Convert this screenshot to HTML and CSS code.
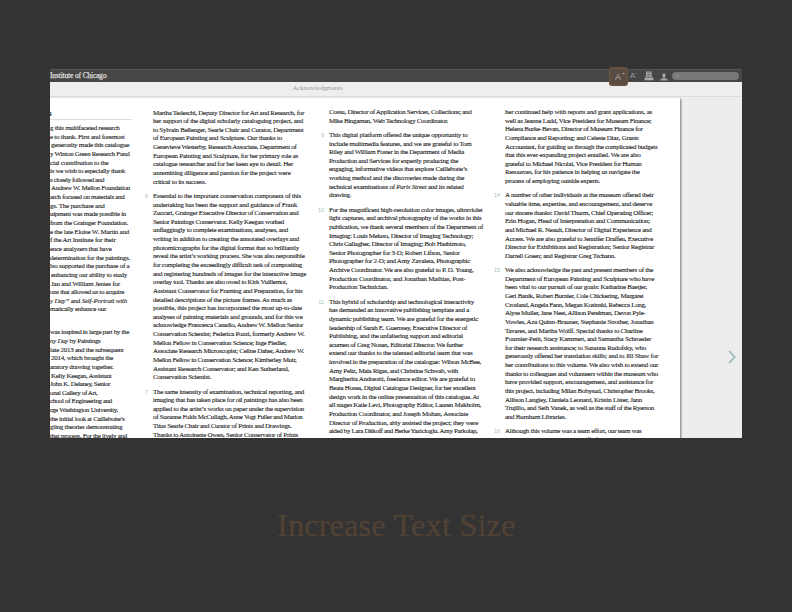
FILE: index.html
```html
<!DOCTYPE html>
<html lang="en">
<head>
<meta charset="utf-8">
<title>Acknowledgments</title>
<link rel="stylesheet" href="styles.css">
</head>
<body>
<main class="viewer">
  <header class="bar">
    <span class="brand" data-w="56.5">Institute of Chicago</span>
    <div class="tools">
      <span class="tool active">A<sup>+</sup></span>
      <span class="tool minus">A<sup>−</sup></span>
      <svg class="print" viewBox="0 0 10 10"><path d="M2.700 4.500V1h4.200v3.500M2.900 2.700h3.600" fill="none" stroke="#a9a9a9" stroke-width="1.200"/><path d="M1.700 4.200h6.400v1.600H1.700zM.6 6.500h8.800v2.700H.6z" fill="#a9a9a9"/></svg>
      <svg class="user" viewBox="0 0 8 8"><path d="M4 .5c2.300 0 2 2.700.8 3.700v1.100l2.900.6v1.600H.3V5.900l2.900-.6V4.200C2 3.200 1.700.5 4 .5z" fill="#a4a4a4"/></svg>
      <div class="search"><svg viewBox="0 0 6 6"><circle cx="3.500" cy="2.300" r="1.600"/><path d="M2.300 3.500L.7 5.300"/></svg></div>
    </div>
  </header>
  <div class="crumb"><span data-w="50">Acknowledgments</span></div>
  <div class="stage">
    <article class="page">
      <section class="col first"><h2>s</h2></section>
      <section class="col second"></section>
      <section class="col third"></section>
      <section class="col fourth"></section>
    </article>
    <svg class="next" viewBox="0 0 8 14"><path d="M1 1l5.700 6L1 13" fill="none" stroke="#a9bfc7" stroke-width="1.900"/></svg>
  </div>
</main>
<p class="caption"><span data-w="238.500">Increase Text Size</span></p>
<script src="script.js"></script>
</body>
</html>
```
FILE: script.js
```js
// Each paragraph: [number, [line width, line text], ...]
const columns = {
  first: [
    ['', [69.5, 'g this multifaceted research'], [74.5, 'e to thank. First and foremost'], [78, '&generosity made this catalogue'],
      [79.5, 'y Winton Green Research Fund'], [58.5, 'cial contribution to the'], [75, 'is we wish to especially thank'],
      [54, 's closely followed and'], [79, '&Andrew W. Mellon Foundation'], [74.5, 'arch focused on materials and'],
      [54.5, 'gs. The purchase and'], [76, 'uipment was made possible in'], [78, 'from the Grainger Foundation.'],
      [79, 'e the late Eloise W. Martin and'], [65.5, 'f the Art Institute for their'], [61.5, 'ence analyzers that have'],
      [80, 'determination for the paintings.'], [79.5, 'lso supported the purchase of a'], [76, '&enhancing our ability to study'],
      [69, '&Jan and William Jentes for'], [74, 'ons that allowed us to acquire'],
      [77, '<em>y Day”</em> and <em>Self-Portrait with</em>'], [56, 'matically enhance our'], [0, '&nbsp;']],
    ['', [79, 'was inspired in large part by the'], [50.5, '<em>ny Day</em> by Paintings'], [73.5, 'late 2013 and the subsequent'],
      [62, '&2014, which brought the'], [63.5, 'aratory drawing together.'], [60.5, '&Kelly Keegan, Assistant'],
      [60, 'John K. Delaney, Senior'], [47.5, 'onal Gallery of Art,'], [62, 'chool of Engineering and'],
      [68, 'rge Washington University,'], [74.5, 'the initial look at Caillebotte’s'],
      [72.5, 'gling theories demonstrating'], [77, 'that process. For the lively and']]
  ],
  second: [
    ['', [151, 'Martha Tedeschi, Deputy Director for Art and Research, for'], [150, 'her support of the digital scholarly cataloguing project, and'],
      [150.5, 'to Sylvain Bellenger, Searle Chair and Curator, Department'], [129, 'of European Painting and Sculpture. Our thanks to'],
      [143.5, 'Genevieve Westerby, Research Associate, Department of'], [145, 'European Painting and Sculpture, for her primary role as'],
      [140, 'catalogue researcher and for her keen eye to detail. Her'], [137.5, 'unremitting diligence and passion for the project were'],
      [53, 'critical to its success.']],
    ['6', [148, 'Essential to the important conservation component of this'], [144, 'undertaking has been the support and guidance of Frank'],
      [145.5, 'Zuccari, Grainger Executive Director of Conservation and'], [131, 'Senior Paintings Conservator. Kelly Keegan worked'],
      [135, 'unflaggingly to complete examinations, analyses, and'], [146, 'writing in addition to creating the annotated overlays and'],
      [146, 'photomicrographs for the digital format that so brilliantly'], [151.5, 'reveal the artist’s working process. She was also responsible'],
      [149, 'for completing the exceedingly difficult task of compositing'], [153, 'and registering hundreds of images for the interactive image'],
      [134, 'overlay tool. Thanks are also owed to Kirk Vuillemot,'], [149.5, 'Assistant Conservator for Framing and Preparation, for his'],
      [139, 'detailed descriptions of the picture frames. As much as'], [149, 'possible, this project has incorporated the most up-to-date'],
      [149.5, 'analyses of painting materials and grounds, and for this we'], [150, 'acknowledge Francesca Casadio, Andrew W. Mellon Senior'],
      [151.5, 'Conservation Scientist; Federica Pozzi, formerly Andrew W.'], [133.5, 'Mellon Fellow in Conservation Science; Inge Fiedler,'],
      [151, 'Associate Research Microscopist; Celine Daher, Andrew W.'], [143.5, 'Mellon Fellow in Conservation Science; Kimberley Muir,'],
      [136, 'Assistant Research Conservator; and Ken Sutherland,'], [58, 'Conservation Scientist.']],
    ['7', [151, 'The same intensity of examination, technical reporting, and'], [149.5, 'imaging that has taken place for oil paintings has also been'],
      [151, 'applied to the artist’s works on paper under the supervision'], [149.5, 'of Suzanne Folds McCullagh, Anne Vogt Fuller and Marion'],
      [138.5, 'Titus Searle Chair and Curator of Prints and Drawings.'], [145, 'Thanks to Antoinette Owen, Senior Conservator of Prints']]
  ],
  third: [
    ['', [142.5, 'Cossu, Director of Application Services, Collections; and'], [119, 'Mike Bingaman, Web Technology Coordinator.']],
    ['9', [138.5, 'This digital platform offered the unique opportunity to'], [142.5, 'include multimedia features, and we are grateful to Tom'],
      [135, 'Riley and William Foster in the Department of Media'], [129, 'Production and Services for expertly producing the'],
      [138, 'engaging, informative videos that explore Caillebotte’s'], [135, 'working method and the discoveries made during the'],
      [134.5, 'technical examinations of <em>Paris Street</em> and its related'], [22, 'drawing.']],
    ['10', [153.5, 'For the magnificent high-resolution color images, ultraviolet'], [152.5, 'light captures, and archival photography of the works in this'],
      [154, 'publication, we thank several members of the Department of'], [144, 'Imaging: Louis Meluso, Director of Imaging Technology;'],
      [137, 'Chris Gallagher, Director of Imaging; Bob Hashimoto,'], [130.5, 'Senior Photographer for 3-D; Robert Lifson, Senior'],
      [141, 'Photographer for 2-D; and Amy Zavaleta, Photographic'], [144.5, 'Archive Coordinator. We are also grateful to P. D. Young,'],
      [136.5, 'Production Coordinator, and Jonathan Mathias, Post-'], [59, 'Production Technician.']],
    ['11', [145, 'This hybrid of scholarship and technological interactivity'], [140, 'has demanded an innovative publishing template and a'],
      [149, 'dynamic publishing team. We are grateful for the energetic'], [138, 'leadership of Sarah E. Guernsey, Executive Director of'],
      [134, 'Publishing, and the unfaltering support and editorial'], [134, 'acumen of Greg Nosan, Editorial Director. We further'],
      [143.5, 'extend our thanks to the talented editorial team that was'], [152, 'involved in the preparation of the catalogue: Wilson McBee,'],
      [129, 'Amy Peltz, Maia Rigas, and Christine Schwab, with'], [146, 'Margherita Andreotti, freelance editor. We are grateful to'],
      [146.5, 'Beata Hosea, Digital Catalogue Designer, for her excellent'], [150, 'design work in the online presentation of this catalogue. At'],
      [152, 'all stages Katie Levi, Photography Editor, Lauren Makholm,'], [139, 'Production Coordinator, and Joseph Mohan, Associate'],
      [149, 'Director of Production, ably assisted the project; they were'], [148.5, 'aided by Lara Ditkoff and Berke Yazicioglu. Amy Parkolap,'],
      [128, 'Production Coordinator, and museum with the book']]
  ],
  fourth: [
    ['', [147, 'her continued help with reports and grant applications, as'], [146.5, 'well as Jeanne Ladd, Vice President for Museum Finance;'],
      [137.5, 'Helena Burke-Bevan, Director of Museum Finance for'], [133.5, 'Compliance and Reporting; and Celeste Diaz, Grants'],
      [152.5, 'Accountant, for guiding us through the complicated budgets'], [135.5, 'that this ever-expanding project entailed. We are also'],
      [136.5, 'grateful to Michael Nicolai, Vice President for Human'], [134.5, 'Resources, for his patience in helping us navigate the'],
      [95, 'process of employing outside experts.']],
    ['14', [148.5, 'A number of other individuals at the museum offered their'], [147, 'valuable time, expertise, and encouragement, and deserve'],
      [148, 'our sincere thanks: David Thurm, Chief Operating Officer;'], [145, 'Erin Hogan, Head of Interpretation and Communication;'],
      [146.5, 'and Michael R. Neault, Director of Digital Experience and'], [148, 'Access. We are also grateful to Jennifer Draffen, Executive'],
      [149, 'Director for Exhibitions and Registration; Senior Registrar'], [110.5, 'Darrell Green; and Registrar Greg Tschann.']],
    ['15', [148, 'We also acknowledge the past and present members of the'], [149, 'Department of European Painting and Sculpture who have'],
      [142, 'been vital to our pursuit of our goals: Katharine Baetjer,'], [138.5, 'Geri Banik, Robert Burnier, Cole Chickering, Margaret'],
      [141, 'Crosland, Angela Fann, Megan Kosinski, Rebecca Long,'], [140.5, 'Alyse Muller, Jane Neet, Allison Perelman, Devon Pyle-'],
      [148.5, 'Vowles, Aza Quinn-Brauner, Stephanie Strother, Jonathan'], [137.5, 'Tavares, and Martha Wolff. Special thanks to Charline'],
      [146, 'Fournier-Petit, Stacy Kammert, and Samantha Schroeder'], [141, 'for their research assistance; to Susanna Rudofsky, who'],
      [153, 'generously offered her translation skills; and to Jill Shaw for'], [153, 'her contributions to this volume. We also wish to extend our'],
      [153, 'thanks to colleagues and volunteers within the museum who'], [148, 'have provided support, encouragement, and assistance for'],
      [149.5, 'this project, including Milan Bobysud, Christopher Brooks,'], [137, 'Allison Langley, Daniela Leonard, Kristin Lister, Jann'],
      [149, 'Trujillo, and Seth Vanek, as well as the staff of the Ryerson'], [61, 'and Burnham Libraries.']],
    ['16', [136.5, 'Although this volume was a team effort, our team was'], [152, 'immeasurably aided by the staff of the museum involved']]
  ]
};

for (const [name, paragraphs] of Object.entries(columns)) {
  const column = document.querySelector('.' + name);
  for (const [number, ...lines] of paragraphs) {
    const p = document.createElement('p');
    if (number) p.dataset.number = number;
    for (const [width, text] of lines) {
      const indented = text[0] === '&' && text !== '&nbsp;';
      const row = document.createElement('span');
      row.className = indented ? 'row indented' : 'row';
      row.innerHTML = '<span data-w="' + width + '">' + (indented ? text.slice(1) : text) + '</span>';
      p.append(row);
    }
    column.append(p);
  }
}

for (const el of document.querySelectorAll('[data-w]')) {
  const target = Number(el.dataset.w);
  if (!target) continue;
  const natural = el.getBoundingClientRect().width;
  el.style.letterSpacing = (target - natural) / el.textContent.length + 'px';
}
```
FILE: styles.css
```css
* { box-sizing: border-box; }
body {
  margin: 0;
  height: 612px;
  padding: 69px 50px 0;
  overflow: hidden;
  background: #333;
  font-family: Georgia, "Liberation Serif", serif;
}
.viewer {
  width: 692px;
  height: 369px;
  display: flex;
  flex-direction: column;
  background: #ededed;
}
.bar {
  height: 13px;
  flex: none;
  display: flex;
  align-items: center;
  justify-content: space-between;
  background: #464646;
  border-top: 1px solid #555;
  padding-right: 3px;
}
.brand {
  font-size: 7.4px;
  line-height: 12px;
  color: #ddd;
  white-space: nowrap;
  -webkit-text-stroke: .25px #ddd;
}
.tools { display: flex; align-items: center; height: 12px; }
.tool {
  position: relative;
  font: 9px/12px "Liberation Sans", sans-serif;
  color: #aaa;
}
.tool sup {
  position: absolute;
  left: 11px;
  top: 1px;
  font-size: 5px;
  line-height: 7px;
}
.active {
  width: 19px;
  height: 19px;
  padding-left: 4px;
  border: 2px solid #66513f;
  border-radius: 3px;
  background: #584b42;
  color: #b5aaa2;
  line-height: 16px;
}
.minus { width: 14px; padding-left: 2px; font-size: 8px; color: #929ba0; }
.minus sup { left: 7px; top: 0; }
.print { width: 10px; height: 10px; margin-left: 2px; }
.user { width: 8px; height: 8px; margin: 1px 0 0 6px; }
.search {
  width: 67px;
  height: 8px;
  margin-left: 4px;
  border-radius: 4px;
  background: #777;
  display: flex;
  align-items: center;
  padding-left: 3px;
}
.search svg { width: 5px; height: 5px; fill: none; stroke: #999; stroke-width: .8; }
.crumb {
  height: 15px;
  flex: none;
  padding-left: 242.5px;
  background: #eee;
  border-bottom: 1px solid #dcdcdc;
  font-size: 7px;
  line-height: 12px;
  color: #9c9c9c;
  white-space: nowrap;
}
.stage { flex: 1; min-height: 0; display: flex; overflow: hidden; }
.page {
  width: 630px;
  margin-top: 1px;
  padding-top: 10px;
  display: grid;
  grid-template-columns: 103px 176px 176px 1fr;
  background: #fff;
  box-shadow: 1px 1px 2px #777;
  color: #222;
  font-size: 7px;
  line-height: 8.65px;
  -webkit-text-stroke: .1px #222;
}
.col { min-width: 0; }
.second { padding-top: .5px; }
.col p { margin: 0 0 5.6px; position: relative; }
.col p[data-number]::before {
  content: attr(data-number);
  position: absolute;
  right: calc(100% + 5px);
  top: 0;
  font: 5.5px/8.65px "Liberation Sans", sans-serif;
  color: #a9c0c2;
  -webkit-text-stroke: 0;
}
.row { display: block; white-space: nowrap; height: 8.65px; }
.indented { padding-left: 1px; }
.first h2 {
  width: 81.5px;
  height: 12px;
  margin: 0 0 4px;
  font-size: 8px;
  line-height: 12px;
  text-indent: -1.5px;
  border-bottom: 1px solid #ddd;
}
.next { width: 8px; height: 14px; margin: 253px 0 0 48px; }
.caption {
  margin: 69px 0 0;
  padding-left: 227px;
  font-size: 32.5px;
  line-height: 37px;
  color: #504235;
  white-space: nowrap;
  -webkit-text-stroke: .3px #504235;
}
```
